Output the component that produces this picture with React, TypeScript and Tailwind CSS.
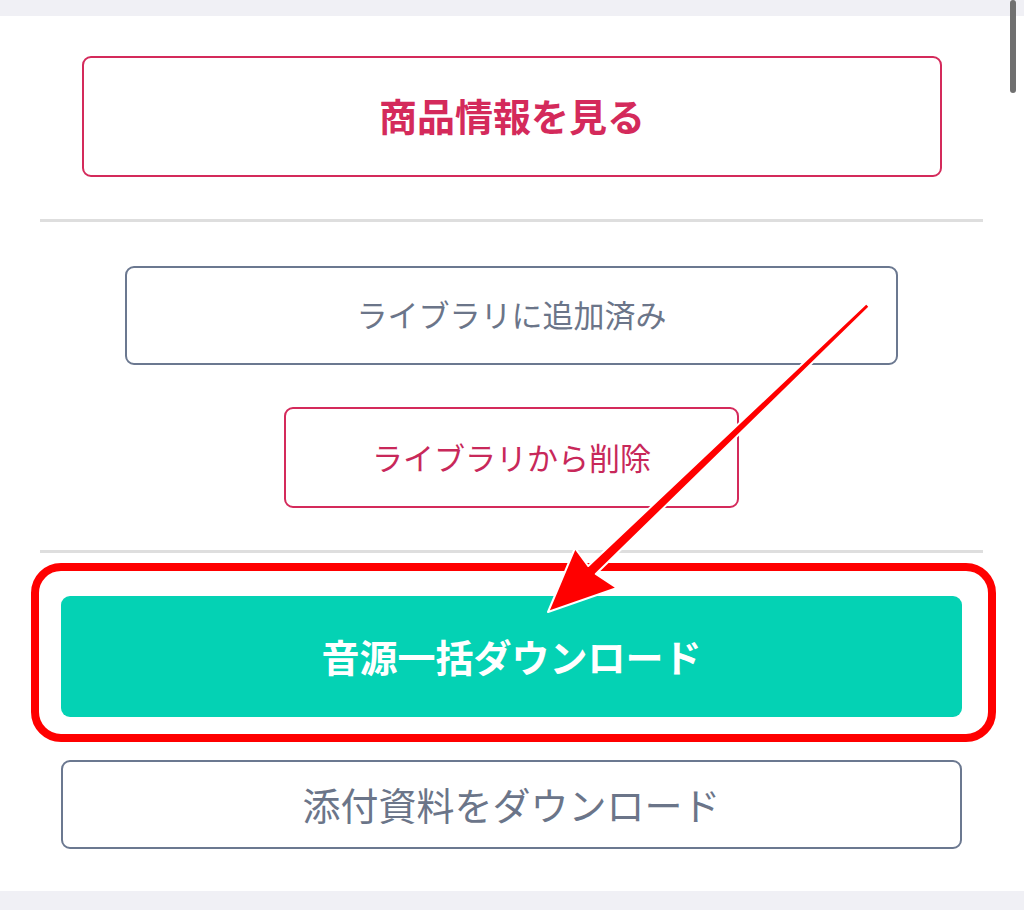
import React from "react";

const font = "font-['Noto_Sans_CJK_JP','Noto_Sans',sans-serif]";

function Arrow() {
  return (
    <svg
      className="absolute left-0 top-0 pointer-events-none"
      width="1024"
      height="910"
      viewBox="0 0 1024 910"
    >
      <polygon
        points="866.3,303.2 588.2,566 575,548 548,612 617,588 595.8,574 869.7,306.8"
        fill="#ff0000"
        stroke="#ffffff"
        strokeWidth="2"
        strokeLinejoin="round"
      />
    </svg>
  );
}

export default function App() {
  return (
    <div className={`relative w-[1024px] h-[910px] overflow-hidden bg-white ${font}`}>
      <div className="h-[16px] bg-[#f0f0f5]" />

      <div className="pl-[40px] pr-[41px]">
        <button className="flex w-[860px] h-[121px] mx-[42px] mt-[40px] pb-[5px] items-center justify-center rounded-[9px] border-2 border-[#d42a5b] text-[38px] font-bold text-[#d42a5b]">
          商品情報を見る
        </button>

        <div className="mt-[42px] h-[3px] bg-[#dedede]" />

        <button className="mx-auto mt-[44px] flex h-[99px] w-[773px] pb-[2px] items-center justify-center rounded-[9px] border-2 border-[#6b7890] text-[31px] text-[#6b7589]">
          ライブラリに追加済み
        </button>

        <button className="mx-auto mt-[42px] flex h-[101px] w-[455px] items-center justify-center rounded-[9px] border-2 border-[#d42a5b] text-[31px] text-[#c8285a]">
          ライブラリから削除
        </button>

        <div className="mt-[42px] h-[3px] bg-[#dedede]" />

        <div className="relative mx-[21px] mt-[43px]">
          <div className="absolute -left-[30px] -right-[34px] -top-[33px] -bottom-[25px] rounded-[30px] border-[8px] border-[#ff0000]" />
          <button className="relative flex h-[121px] w-full pb-[2px] items-center justify-center rounded-[9px] bg-[#04d2b4] text-[38px] font-bold text-white">
            音源一括ダウンロード
          </button>
        </div>

        <button className="mx-[21px] mt-[43px] flex h-[89px] w-[901px] pb-[2px] items-center justify-center rounded-[9px] border-2 border-[#6b7890] text-[38px] text-[#6b7589]">
          添付資料をダウンロード
        </button>
      </div>

      <div className="mt-[42px] h-[30px] bg-[#f0f0f5]" />

      <div className="absolute right-[8px] top-0 h-[93px] w-[6px] rounded-full bg-[#707070]" />

      <Arrow />
    </div>
  );
}
